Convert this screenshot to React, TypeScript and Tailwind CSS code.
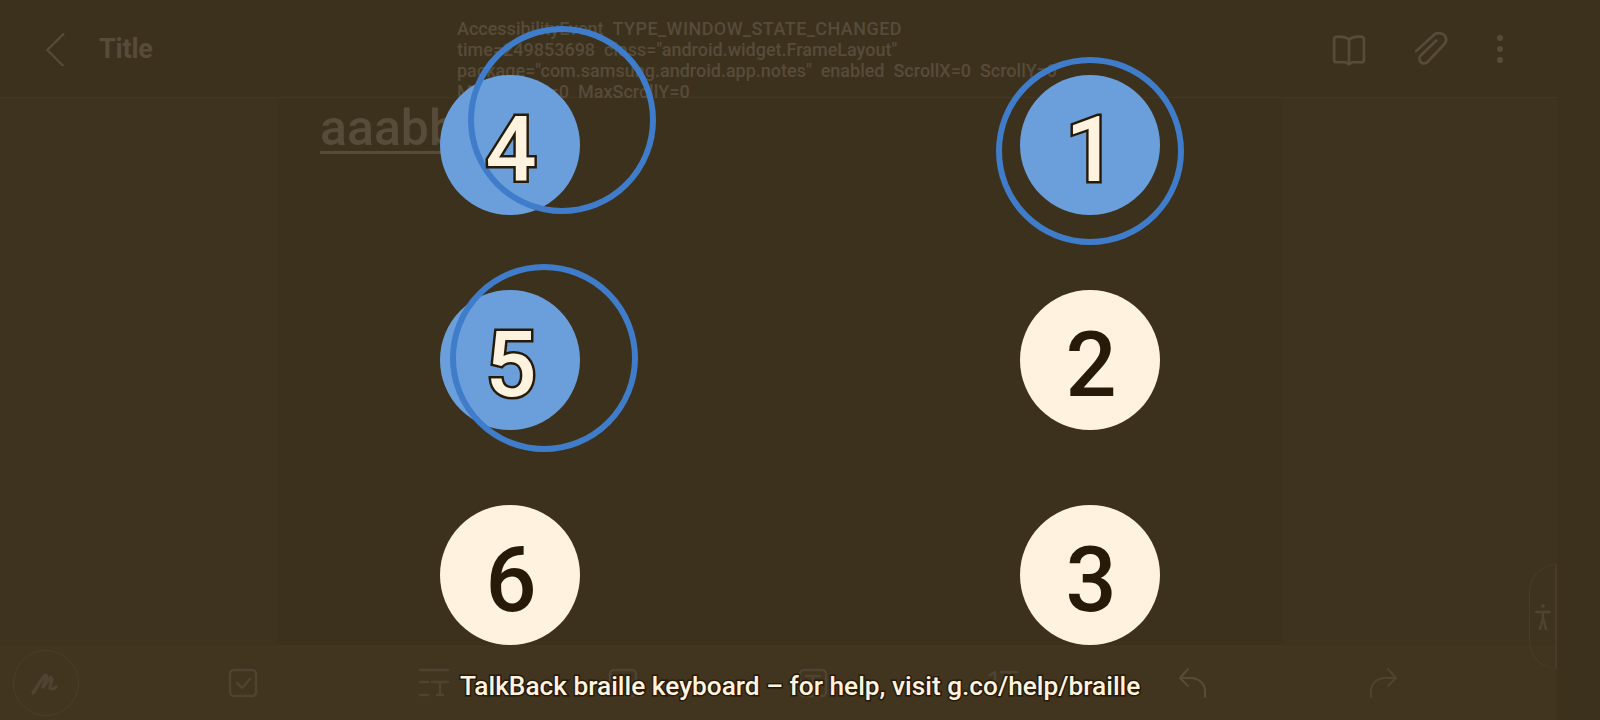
const DIM = "#574b3a";
const FAINT = "#4f4331";
const DOTS = [
  { n: 4, active: true, ring: "left-[28px] top-[-49px]" },
  { n: 1, active: true, ring: "left-[-24px] top-[-18px]" },
  { n: 5, active: true, ring: "left-[10px] top-[-26px]" },
  { n: 2, active: false, ring: "" },
  { n: 6, active: false, ring: "" },
  { n: 3, active: false, ring: "" },
];

function Icon({ d, w = 32, color = FAINT, sw = 2, fill = "none" }: { d: string; w?: number; color?: string; sw?: number; fill?: string }) {
  return (
    <svg width={w} height={w} viewBox="0 0 32 32" fill={fill} stroke={color} strokeWidth={sw} strokeLinecap="round" strokeLinejoin="round">
      <path d={d} />
    </svg>
  );
}

function Dot({ n, active, ring }: { n: number; active: boolean; ring: string }) {
  return (
    <div className={`relative flex h-[140px] w-[140px] items-center justify-center rounded-full ${active ? "bg-[#6b9fdb]" : "bg-[#fff3df]"}`}>
      {active && <div className={`absolute h-[188px] w-[188px] rounded-full border-[6px] border-[#3f7dcb] ${ring}`} />}
      <span
        className={`relative ml-[2px] mt-[11px] text-[90px] leading-none font-[550] ${active ? "text-[#fff3df] [-webkit-text-stroke:5px_#261a08] [paint-order:stroke]" : "text-[#261a08]"}`}
      >
        {n}
      </span>
    </div>
  );
}

export default function App() {
  return (
    <div className="relative flex h-[720px] w-[1600px] overflow-hidden bg-[#3c311d] font-['Roboto',sans-serif]">
      <div className="flex w-[1557px] flex-col">
        <header className="flex h-[98px] items-center border-b border-[#443825] bg-[#3c311d]">
          <div className="ml-[41px] w-[58px]">
            <Icon w={34} color={DIM} d="M21 2 6 17l15 15" />
          </div>
          <span className="mt-[2px] text-[27px] font-bold tracking-[-0.2px] text-[#574b3a]">Title</span>
          <div className="ml-auto mr-[52px] flex items-center gap-[46px]">
            <div className="mr-[3px]">
              <Icon w={34} color={DIM} sw={2.500} d="M16 7C13 4.500 8 4 3.500 4.500A2 2 0 0 0 2 6.500v20a2 2 0 0 0 2 2h9l3 2 3-2h9a2 2 0 0 0 2-2v-20a2 2 0 0 0-1.500-2C24 4 19 4.500 16 7Zm0 0v21" />
            </div>
            <Icon w={34} color={DIM} sw={2.500} d="M1 18 18 2.500c3-2.500 8-1.500 10 1 2 3 1.500 6-.5 8L12 28c-2 2-5 2-6.500.5S3.500 24 5.500 22L20 8" />
            <div className="flex w-[10px] flex-col items-center gap-[5px]">
              <div className="h-[6px] w-[6px] rounded-full bg-[#574b3a]" />
              <div className="h-[6px] w-[6px] rounded-full bg-[#574b3a]" />
              <div className="h-[6px] w-[6px] rounded-full bg-[#574b3a]" />
            </div>
          </div>
        </header>
        <div className="flex flex-1">
          <div className="w-[277px] bg-[#3e331f]" />
          <main className="w-[1006px] bg-[#3c311d] pl-[43px] pt-[7px]">
            <span className="inline-block border-b-[3px] border-[#574b3a] text-[50px] leading-[46px] font-medium text-[#574b3a]">aaabb</span>
          </main>
          <div className="flex-1 bg-[#3e331f]" />
        </div>
        <footer className="flex h-[75px] items-center bg-[#413520] pl-[13px]">
          <div className="mr-[69px] flex h-[66px] w-[66px] shrink-0 items-center justify-center rounded-full border border-[#4a3e2b]">
            <Icon w={32} sw={3.500} d="M3 26 14 9c2-2 3 0 2 3l-3 8 7-9c1-1 2 0 2 2l-2 7c0 2 3 3 6 0" />
          </div>
          <div className="flex w-[190px] justify-center">
            <Icon sw={2.500} d="M7 3h18a4 4 0 0 1 4 4v18a4 4 0 0 1-4 4H7a4 4 0 0 1-4-4V7a4 4 0 0 1 4-4Zm3 13 5 5 8-9" />
          </div>
          <div className="flex w-[190px] justify-center">
            <Icon sw={2.500} d="M3 3h28M3 15h8M3 28h8M15 15h16M23 15v13M20 28h6" />
          </div>
          <div className="flex w-[190px] justify-center">
            <Icon sw={2.500} d="M7 3h18a4 4 0 0 1 4 4v18a4 4 0 0 1-4 4H7a4 4 0 0 1-4-4V7a4 4 0 0 1 4-4Z" />
          </div>
          <div className="flex w-[190px] justify-center">
            <Icon sw={2.500} d="M7 3h18a4 4 0 0 1 4 4v18a4 4 0 0 1-4 4H7a4 4 0 0 1-4-4V7a4 4 0 0 1 4-4Zm2 6h14M16 9v14" />
          </div>
          <div className="flex w-[190px] justify-center">
            <Icon sw={2.500} d="M3 8l5-3v22M14 5h16M22 5v22" />
          </div>
          <div className="flex w-[190px] justify-center">
            <Icon color={DIM} d="M11 2 3 11l8 8M3 11h11c9 0 14 7 14 13v6" />
          </div>
          <div className="flex w-[190px] justify-center">
            <Icon d="M21 2l8 9-8 8M29 11H18C9 11 4 18 4 24v6" />
          </div>
        </footer>
      </div>
      <div className="flex-1 bg-[#3c311d]" />

      <div className="absolute left-[1529px] top-[564px] flex h-[105px] w-[28px] items-center justify-center rounded-l-[28px] border border-r-2 border-[#483c29]">
        <svg width="16" height="28" viewBox="0 0 16 28" fill="none" stroke={FAINT} strokeWidth="2.500" strokeLinecap="round">
          <circle cx="8" cy="3" r="2" fill={FAINT} stroke="none" />
          <path d="M1 9h14M8 9v8M8 15l-3 11M8 15l3 11" />
        </svg>
      </div>

      <div className="absolute left-[457px] top-[18px] whitespace-pre text-[18px] leading-[21px] font-medium text-[#574b3a]">
        <div>
          {"AccessibilityEvent  "}
          <span className="tracking-[0.45px]">TYPE_WINDOW_STATE_CHANGED</span>
        </div>
        <div>{'time=249853698  class="android.widget.FrameLayout"'}</div>
        <div>{'package="com.samsung.android.app.notes"  enabled  ScrollX=0  ScrollY=0'}</div>
        <div>MaxScrollX=0  MaxScrollY=0</div>
      </div>

      <div className="absolute left-0 top-0 grid grid-cols-[140px_140px] gap-x-[440px] gap-y-[75px] pl-[440px] pt-[75px]">
        {DOTS.map((dot) => (
          <Dot key={dot.n} {...dot} />
        ))}
      </div>

      <div className="absolute left-[460px] top-[669px] whitespace-nowrap text-[26.25px] leading-[34px] font-medium text-[#fff3df] [-webkit-text-stroke:3px_#261a08] [paint-order:stroke]">
        TalkBack braille keyboard – for help, visit g.co/help/braille
      </div>
    </div>
  );
}
